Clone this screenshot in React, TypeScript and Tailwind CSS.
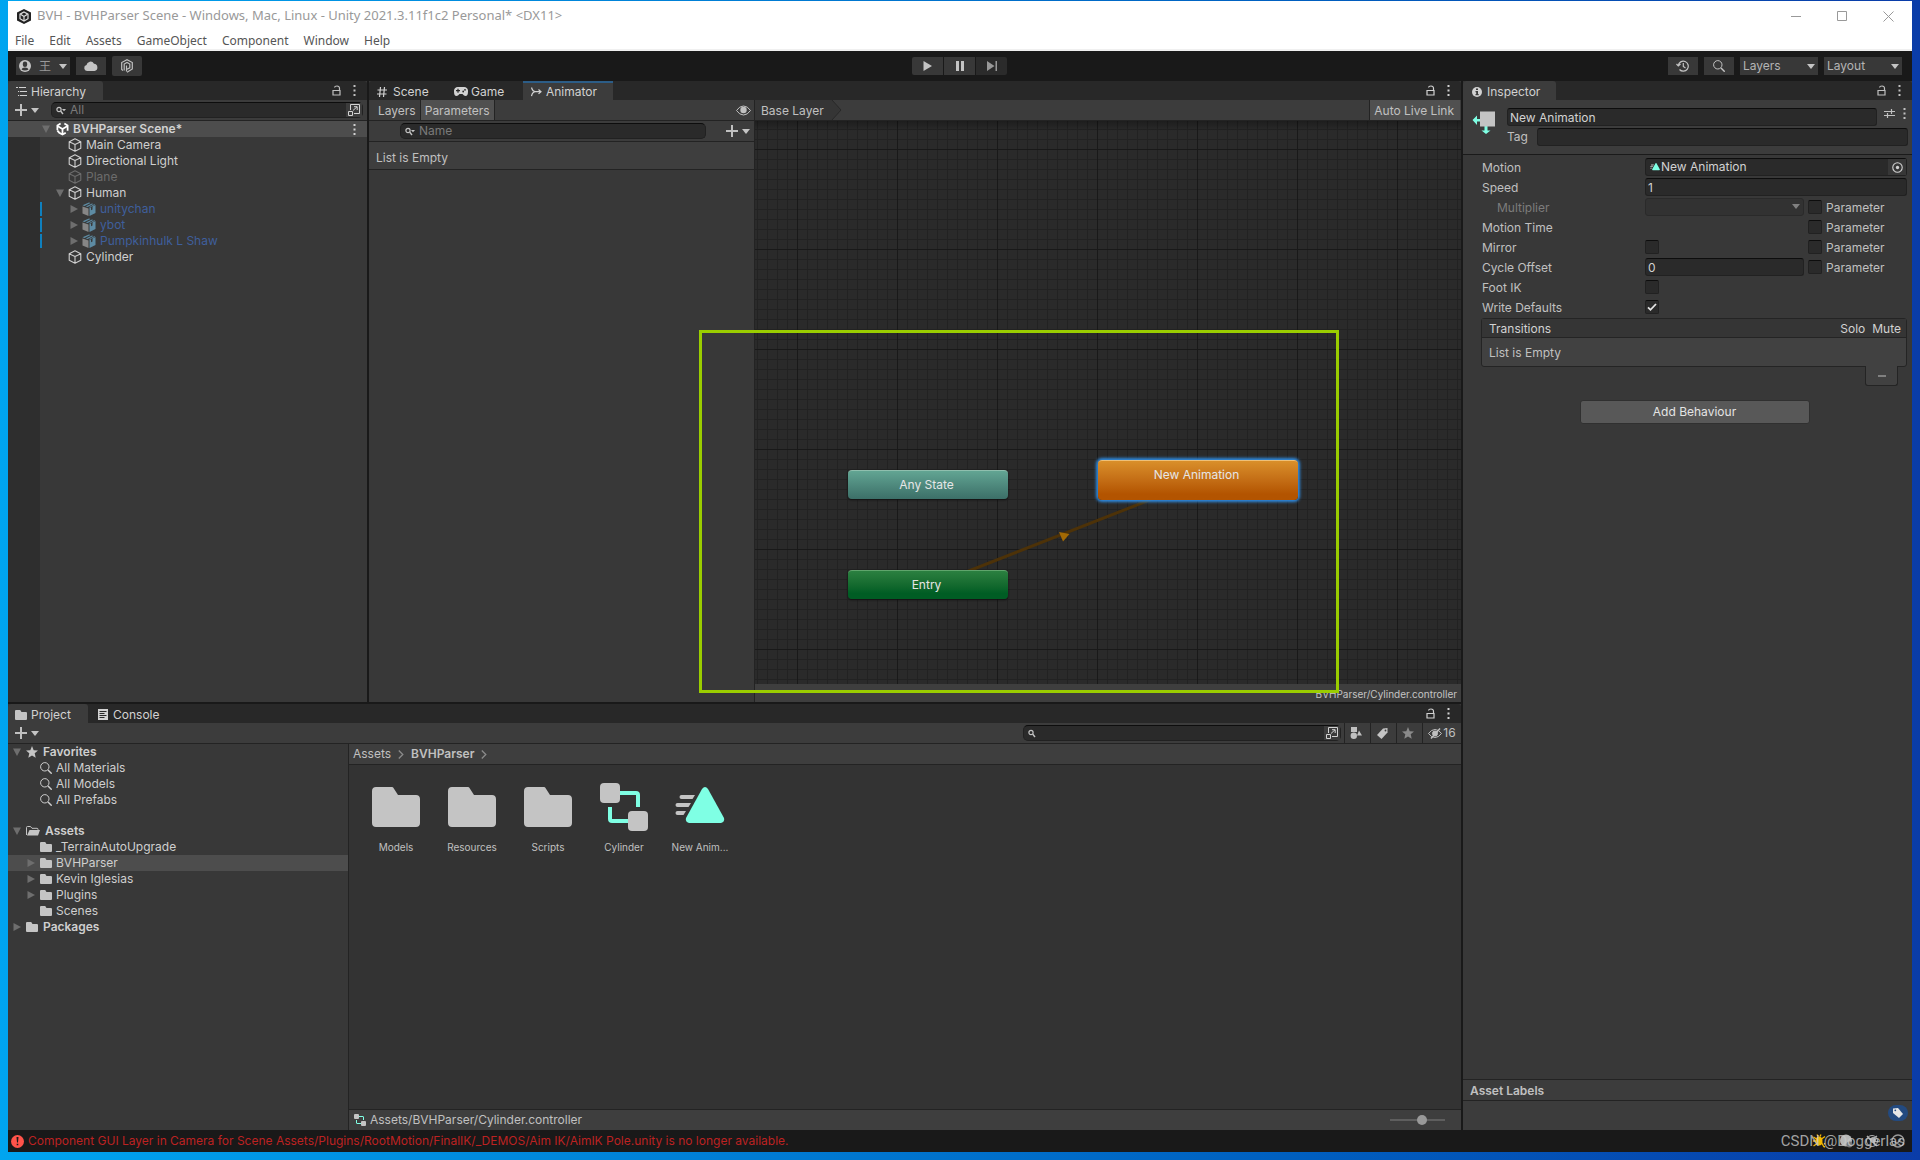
import React, { useState } from "react";

type IconProps = { className?: string };

function Caret({ className = "w-2 h-[5px] text-[#c4c4c4]" }: IconProps) {
    return (
        <svg className={className} viewBox="0 0 8 5" fill="currentColor">
            <path d="M0 0h8L4 5z" />
        </svg>
    );
}

function Foldout({ open }: { open?: boolean }) {
    return (
        <svg className="w-2 h-2 shrink-0 text-[#6e6e6e]" viewBox="0 0 8 8" fill="currentColor">
            {open ? <path d="M0 0.500h8L4 8z" /> : <path d="M0.500 0v8L8 4z" />}
        </svg>
    );
}

function LockIcon() {
    return (
        <svg className="w-[9px] h-[11px]" viewBox="0 0 9 11" fill="none" stroke="currentColor">
            <path d="M1 5.500h7v4.500h-7zM7.500 5.500V3.500C7.500 1.800 6.500 1 5 1S2.600 1.600 2.500 2.500" strokeWidth="1.200" />
        </svg>
    );
}

function DotsIcon() {
    return (
        <svg className="w-[3px] h-[11px]" viewBox="0 0 3 11" fill="currentColor">
            <path d="M0.500 0h2v2h-2zM0.500 4.500h2v2h-2zM0.500 9h2v2h-2z" />
        </svg>
    );
}

function PlusIcon() {
    return (
        <svg className="w-3 h-3" viewBox="0 0 12 12" fill="currentColor">
            <path d="M5 0h2v5h5v2H7v5H5V7H0V5h5z" />
        </svg>
    );
}

function FieldSearchIcon({ menu }: { menu?: boolean }) {
    return (
        <svg className="w-[10px] h-[9px] shrink-0 text-[#c4c4c4]" viewBox="0 0 10 9" fill="none" stroke="currentColor">
            <circle cx="3" cy="3.500" r="2.100" strokeWidth="1.200" />
            <path d="M4.800 5.200L7 8" strokeWidth="1.400" />
            {menu && <path d="M6 3h4L8 5.200z" fill="currentColor" stroke="none" />}
        </svg>
    );
}

function SearchIcon({ className = "w-3 h-3" }: IconProps) {
    return (
        <svg className={className} viewBox="0 0 12 12" fill="none" stroke="currentColor">
            <circle cx="4.800" cy="4.800" r="4.200" strokeWidth="1" />
            <path d="M8 8l3.700 3.700" strokeWidth="1.400" />
        </svg>
    );
}

function PopoutIcon() {
    return (
        <svg className="w-3 h-3" viewBox="0 0 12 12" fill="none" stroke="currentColor">
            <path d="M2.500 6V0.500h9v9H6M0.500 7.500h4v4h-4zM5 6.500L9 2.800M6 2.700h3.200V6" />
        </svg>
    );
}

function CubeIcon() {
    return (
        <svg className="w-[14px] h-[14px] shrink-0" viewBox="0 0 14 14" fill="none" stroke="currentColor" strokeLinejoin="round">
            <path d="M7 0.700l5.800 3v6.600L7 13.300l-5.800-3V3.700zM1.200 3.700L7 6.600l5.800-2.900M7 6.600v6.700" strokeWidth="1.100" />
        </svg>
    );
}

function PrefabIcon() {
    return (
        <svg className="w-[14px] h-[14px] shrink-0" viewBox="0 0 14 14">
            <path d="M0.500 4.500L6.500 6.500V14L0.500 11.500z" fill="#868686" />
            <path d="M0.500 3.300L7 0.500l1.500 0.500-6 2.900zM3.800 4.500L10 1.500l1.200 0.400-5.500 3.200z" fill="#5d8ba3" />
            <path d="M7.500 6L9 5.300v3l1.500-0.800v-3L13.500 3v8L7.500 14z" fill="#5d8ba3" />
            <path d="M6.800 5.300l5.400-3L13.300 2.700 7.500 5.500z" fill="#5d8ba3" />
        </svg>
    );
}

function UnityIcon({ className = "w-[13px] h-[14px]" }: IconProps) {
    return (
        <svg className={className} viewBox="0 0 14 14" fill="none" stroke="currentColor">
            <path d="M5 1.200L1.500 3.300v5M1.500 8.800L3.500 11l3.500 2 3.500-2M9 1.200l3.500 2.100V8.800" strokeWidth="1.900" />
            <path d="M7 7v5.500M7 7L2 4.100M7 7l5-2.900" strokeWidth="1.900" />
        </svg>
    );
}

function FolderIcon({ className = "w-3 h-[10px] shrink-0 text-[#c4c4c4]" }: IconProps) {
    return (
        <svg className={className} viewBox="0 0 48 40" fill="currentColor">
            <path d="M4 0h15.500c1 0 1.600 0.400 2 1L26 8h18c2.500 0 4 1.500 4 4v24c0 2.500-1.500 4-4 4H4c-2.500 0-4-1.500-4-4V4c0-2.500 1.500-4 4-4z" />
        </svg>
    );
}

function OpenFolderIcon() {
    return (
        <svg className="w-[14px] h-[10px] shrink-0" viewBox="0 0 14 10">
            <path d="M0.500 9V1.500Q0.500 0.500 1.500 0.500H4.500L6 2.300h5q1 0 1 1V4" fill="none" stroke="#c4c4c4" />
            <path d="M3.500 4H14l-2 5.500H1z" fill="#c4c4c4" />
        </svg>
    );
}

function StarIcon({ className }: IconProps) {
    return (
        <svg className={className} viewBox="0 0 12 12" fill="currentColor">
            <path d="M6 0l1.700 4.200 4.300 0.300-3.300 2.800L9.700 11.800 6 9.400 2.300 11.800l1-4.500L0 4.500l4.300-0.300z" />
        </svg>
    );
}

function ControllerIcon({ className }: IconProps) {
    return (
        <svg className={className} viewBox="0 0 48 48">
            <path d="M20 10h16q2 0 2 2v12M10 24v12q0 2 2 2h16" fill="none" stroke="#7fffe4" strokeWidth="4" />
            <rect width="20" height="20" rx="4" fill="#c4c4c4" />
            <rect x="28" y="28" width="20" height="20" rx="4" fill="#c4c4c4" />
        </svg>
    );
}

function ClipIcon({ className }: IconProps) {
    return (
        <svg className={className} viewBox="0 0 50 48">
            <g fill="#c4c4c4">
                <path d="M6.500 12H20l-2.500 4h-11a2 2 0 010-4zM2.500 20H16l-2.500 4h-11a2 2 0 010-4zM2.500 28H11l-2.500 4h-6a2 2 0 010-4z" />
            </g>
            <path d="M27 6q3-4 6 0l16 29q1 4-3 5H14q-4-1-3-5z" fill="#7fffe4" />
        </svg>
    );
}

function EyeIcon() {
    return (
        <svg className="w-[15px] h-[11px]" viewBox="0 0 15 11">
            <path d="M0.500 5.500Q3.500 1 7.500 1t7 4.500Q11.500 10 7.500 10t-7-4.500z" fill="none" stroke="currentColor" />
            <circle cx="7.500" cy="5" r="3.200" fill="currentColor" />
        </svg>
    );
}

function TabActions() {
    return (
        <div className="ml-auto flex items-center gap-3 pr-[11px]">
            <button type="button" aria-label="Lock">
                <LockIcon />
            </button>
            <button type="button" aria-label="Panel menu">
                <DotsIcon />
            </button>
        </div>
    );
}

const inputClass =
    "min-w-0 bg-[#2a2a2a] border border-[#212121] border-t-[#0d0d0d] rounded-[3px] outline-none text-[#d2d2d2] placeholder-[#7a7a7a] disabled:bg-[#303030]";

function Check({ label, defaultChecked, text }: { label: string; defaultChecked?: boolean; text?: string }) {
    return (
        <label className="flex items-center gap-1 h-5">
            <span className="relative block w-[14px] h-[14px]">
                <input
                    type="checkbox"
                    aria-label={label}
                    defaultChecked={defaultChecked}
                    className="peer block appearance-none w-[14px] h-[14px] bg-[#2a2a2a] border border-[#212121] border-t-[#0d0d0d] rounded-[2px]"
                />
                <svg
                    className="absolute inset-0 hidden peer-checked:block pointer-events-none"
                    viewBox="0 0 14 14"
                    fill="none"
                    stroke="#e4e4e4"
                    strokeWidth="1.800"
                >
                    <path d="M3 7.300l2.500 2.500L11 4" />
                </svg>
            </span>
            {text && <span className="pt-[2px]">{text}</span>}
        </label>
    );
}

const menus = ["File", "Edit", "Assets", "GameObject", "Component", "Window", "Help"];

function TitleBar() {
    return (
        <header className="bg-white border-b-2 border-[#f0f0f0] font-['Noto_Sans',sans-serif] text-xs">
            <div className="flex items-center h-[30px] pl-[9px] pr-[18px] text-[#999]">
                <svg className="w-[14px] h-[15px]" viewBox="0 0 14 15">
                    <path d="M7 0l7 3.500v8L7 15l-7-3.500v-8z" fill="#222" />
                    <g fill="none" stroke="#ddd" strokeWidth="1.200">
                        <path d="M7 3l4 2.200v4.500L7 12 3 9.700V5.200z" />
                        <path d="M7 7.500V12M7 7.500L3.500 5.300M7 7.500l3.500-2.200" />
                    </g>
                </svg>
                <h1 className="ml-[6px] text-[13px]">
                    BVH - BVHParser Scene - Windows, Mac, Linux - Unity 2021.3.11f1c2 Personal* &lt;DX11&gt;
                </h1>
                <div className="ml-auto flex items-center gap-9">
                    <button type="button" aria-label="Minimize">
                        <svg className="w-[10px] h-[10px]" viewBox="0 0 10 10" stroke="currentColor">
                            <path d="M0 5.500h10" />
                        </svg>
                    </button>
                    <button type="button" aria-label="Maximize">
                        <svg className="w-[10px] h-[10px]" viewBox="0 0 10 10" fill="none" stroke="currentColor">
                            <path d="M0.500 0.500h9v9h-9z" />
                        </svg>
                    </button>
                    <button type="button" aria-label="Close">
                        <svg className="w-[11px] h-[11px]" viewBox="0 0 11 11" stroke="currentColor">
                            <path d="M0.500 0.500l10 10M10.500 0.500l-10 10" />
                        </svg>
                    </button>
                </div>
            </div>
            <nav className="flex gap-[15px] h-[18px] px-[7px] leading-5 text-[#555]">
                {menus.map((m) => (
                    <button key={m} type="button">
                        {m}
                    </button>
                ))}
            </nav>
        </header>
    );
}

function ToolbarSelect({ label }: { label: string }) {
    return (
        <div className="relative w-[78px]">
            <select
                aria-label={label}
                className="appearance-none block w-full h-[18px] pl-[3px] bg-[#383838] text-[#b4b4b4] outline-none"
            >
                <option>{label}</option>
            </select>
            <Caret className="absolute right-[3px] top-[7px] w-2 h-[5px] text-[#c4c4c4] pointer-events-none" />
        </div>
    );
}

function Toolbar() {
    const btn = "flex items-center justify-center h-[18px] bg-[#383838] text-[#c4c4c4]";
    return (
        <div className="grid grid-cols-3 items-center h-[30px] px-2 bg-[#191919]">
            <div className="flex items-center gap-[6px]">
                <button type="button" aria-label="Account" className={`${btn} w-[54px] gap-2`}>
                    <svg className="w-3 h-3" viewBox="0 0 12 12">
                        <circle cx="6" cy="6" r="6" fill="#c4c4c4" />
                        <path d="M6 1.500a2.200 2.200 0 012.200 2.200v1a2.200 2.200 0 01-4.400 0v-1A2.200 2.200 0 016 1.500zM2.500 9.500Q3 7.500 6 7.500t3.500 2Q8 10.500 6 10.500T2.500 9.500z" fill="#383838" />
                    </svg>
                    <span className="font-['Noto_Sans_CJK_SC',sans-serif] leading-[18px] text-[#999]">王</span>
                    <Caret />
                </button>
                <button type="button" aria-label="Cloud" className={`${btn} w-[30px]`}>
                    <svg className="w-[14px] h-[10px]" viewBox="0 0 14 10" fill="currentColor">
                        <path d="M3 10a3 3 0 01-0.500-5.900A4 4 0 0110 2.700 3.700 3.700 0 0110.500 10z" />
                    </svg>
                </button>
                <button type="button" aria-label="Plastic SCM" className="flex items-center justify-center w-[30px] h-5 bg-[#383838] rounded-[2px]">
                    <svg className="w-3 h-[14px]" viewBox="0 0 12 14" fill="none" stroke="currentColor" strokeWidth="1.200">
                        <path d="M2 11.500L0.700 10.500v-7L6 0.700l5.300 2.800v6.500L6 13.300" />
                        <path d="M3.200 11.500V5L6 3.500 8.800 5v3.800L6 10.300M5.500 12.500V6.500" />
                    </svg>
                </button>
            </div>
            <div className="flex justify-center gap-px">
                <button type="button" aria-label="Play" className={`${btn} w-[31px] rounded-l-[2px]`}>
                    <svg className="w-[9px] h-[10px]" viewBox="0 0 9 10" fill="currentColor">
                        <path d="M0.500 0L9 5 0.500 10z" />
                    </svg>
                </button>
                <button type="button" aria-label="Pause" className={`${btn} w-[31px]`}>
                    <svg className="w-2 h-[10px]" viewBox="0 0 8 10" fill="currentColor">
                        <path d="M0 0h3v10H0zM5 0h3v10H5z" />
                    </svg>
                </button>
                <button type="button" aria-label="Step" className="flex items-center justify-center w-[31px] h-[18px] bg-[#2b2b2b] text-[#999] rounded-r-[2px]">
                    <svg className="w-[10px] h-[10px]" viewBox="0 0 10 10" fill="currentColor">
                        <path d="M0 0l7.500 5L0 10zM8.500 0H10v10H8.500z" />
                    </svg>
                </button>
            </div>
            <div className="flex justify-end gap-[6px] pr-[2px]">
                <button type="button" aria-label="Undo history" className={`${btn} w-[30px]`}>
                    <svg className="w-[14px] h-3" viewBox="0 0 14 12" fill="none" stroke="currentColor" strokeWidth="1.200">
                        <path d="M2.300 5.500A5 5 0 113.500 9.500M0.500 4l1.800 2L4.500 4M7.300 3v3.500l2.200 1.500" />
                    </svg>
                </button>
                <button type="button" aria-label="Search" className={`${btn} w-[30px]`}>
                    <SearchIcon />
                </button>
                <ToolbarSelect label="Layers" />
                <ToolbarSelect label="Layout" />
            </div>
        </div>
    );
}

type Node = {
    name: string;
    kind: "cube" | "prefab";
    fold?: "open" | "closed";
    dim?: boolean;
};

const hierarchy: Node[] = [
    { name: "Main Camera", kind: "cube" },
    { name: "Directional Light", kind: "cube" },
    { name: "Plane", kind: "cube", dim: true },
    { name: "Human", kind: "cube", fold: "open" },
    { name: "unitychan", kind: "prefab", fold: "closed" },
    { name: "ybot", kind: "prefab", fold: "closed" },
    { name: "Pumpkinhulk L Shaw", kind: "prefab", fold: "closed" },
    { name: "Cylinder", kind: "cube" },
];

function HierarchyPanel() {
    return (
        <section className="flex flex-col w-[359px] shrink-0 bg-[#383838]">
            <div className="flex h-[19px] bg-[#282828] rounded-t-[3px]">
                <button type="button" className="flex items-center gap-1 w-[95px] pl-2 pt-[2px] bg-[#3c3c3c] rounded-t-[3px] text-[#d2d2d2]">
                    <svg className="w-[11px] h-[9px]" viewBox="0 0 11 9" stroke="currentColor">
                        <path d="M0 0.500h2M3 0.500h7M4 4.500h7M2 4.500h1.200M4 8.500h7M2 8.500h1.200" />
                    </svg>
                    Hierarchy
                </button>
                <TabActions />
            </div>
            <div className="flex items-center h-[21px] px-[7px] pr-1 bg-[#3c3c3c] border-b border-[#232323]">
                <button type="button" aria-label="Create" className="flex items-center gap-1 w-9">
                    <PlusIcon />
                    <Caret />
                </button>
                <label className={`${inputClass} flex items-center flex-1 h-4 pl-1 gap-1 rounded-[5px]`}>
                    <FieldSearchIcon menu />
                    <input type="text" aria-label="Search hierarchy" placeholder="All" className="flex-1 min-w-0 bg-transparent outline-none placeholder-[#7a7a7a]" />
                    <button type="button" aria-label="Open in search" className="flex items-center justify-center w-4 h-full bg-[#3c3c3c]">
                        <PopoutIcon />
                    </button>
                </label>
            </div>
            <div className="flex items-center h-4 pl-[34px] pr-[11px] bg-[#4d4d4d] font-semibold text-[#d2d2d2]">
                <Foldout open />
                <UnityIcon className="w-[13px] h-[14px] ml-[6px] mr-1 text-white" />
                BVHParser Scene*
                <button type="button" aria-label="Scene menu" className="ml-auto">
                    <DotsIcon />
                </button>
            </div>
            <div className="flex flex-1">
                <div className="w-8 bg-[#2e2e2e]" />
                <ul className="flex-1">
                    {hierarchy.map((n) => (
                        <li
                            key={n.name}
                            className={`flex items-center h-4 ${
                                n.kind === "prefab" ? "text-[#3f5f9c]" : n.dim ? "text-[#6c6c6c]" : "text-[#cfcfcf]"
                            }`}
                        >
                            <span className={n.kind === "prefab" ? "w-[2px] h-[14px] mr-7 bg-[#0f80be]" : "w-4"} />
                            <span className="w-3">{n.fold && <Foldout open={n.fold === "open"} />}</span>
                            {n.kind === "cube" ? <CubeIcon /> : <PrefabIcon />}
                            <span className="ml-1">{n.name}</span>
                        </li>
                    ))}
                </ul>
            </div>
        </section>
    );
}

function StateGraph() {
    const node = "absolute flex justify-center pr-[3px] rounded text-[#e6e6e6] shadow-[0_1px_2px_#111]";
    return (
        <div className="relative flex-1 bg-[#2a2a2a] overflow-hidden">
            <svg className="absolute inset-0 w-full h-full">
                <defs>
                    <pattern id="minor" x="2" y="8" width="10" height="10" patternUnits="userSpaceOnUse">
                        <path d="M0.500 0v10M0 0.500h10" stroke="#222" />
                    </pattern>
                    <pattern id="major" x="42" y="28" width="100" height="100" patternUnits="userSpaceOnUse">
                        <path d="M0.500 0v100M0 0.500h100" stroke="#191919" />
                    </pattern>
                    <linearGradient id="fade" x2="0" y2="1">
                        <stop offset="0" stopColor="#000" stopOpacity="0.300" />
                        <stop offset="1" stopColor="#000" stopOpacity="0" />
                    </linearGradient>
                </defs>
                <rect width="100%" height="100%" fill="url(#minor)" />
                <rect width="100%" height="100%" fill="url(#major)" />
                <rect width="100%" height="10" fill="url(#fade)" />
                <path d="M173 466L443 360" stroke="#4d3208" strokeWidth="3" />
                <path d="M304 411l10.500 2-6.500 7.500z" fill="#a36a04" />
            </svg>
            <button type="button" className={`${node} left-[93px] top-[349px] w-[160px] h-[29px] items-center border-t border-[#8fbfae] bg-linear-to-b from-[#62a593] to-[#3c6f68]`}>
                Any State
            </button>
            <button type="button" className={`${node} left-[93px] top-[449px] w-[160px] h-[29px] items-center border-t border-[#5fa56c] bg-linear-to-b from-[#2b8040] to-[#005d24] to-80%`}>
                Entry
            </button>
            <button
                type="button"
                className="absolute left-[343px] top-[339px] flex justify-center w-[200px] h-10 pt-[6px] pr-[3px] rounded border-t border-[#eec078] bg-linear-to-b from-[#d98f2a] to-[#b35400] to-85% text-[#e6e6e6] leading-4 shadow-[0_0_3px_2px_#2f8be0]"
            >
                New Animation
            </button>
        </div>
    );
}

function AnimatorPanel() {
    const [pane, setPane] = useState("Parameters");
    const tab = "flex items-center pl-2";
    return (
        <section className="relative flex flex-col flex-1 min-w-0 bg-[#383838]">
            <div className="flex h-[19px] bg-[#282828] rounded-t-[3px] text-[#d2d2d2]">
                <button type="button" className={`${tab} gap-[6px] w-[77px] pt-[2px]`}>
                    <svg className="w-[10px] h-[10px]" viewBox="0 0 10 10" stroke="currentColor">
                        <path d="M3.500 0L2.500 10M7.500 0l-1 10M0.500 3h9.500M0 7h9.500" strokeWidth="1.200" />
                    </svg>
                    Scene
                </button>
                <button type="button" className={`${tab} gap-[3px] w-[77px] pt-[2px]`}>
                    <svg className="w-[14px] h-[9px]" viewBox="0 0 14 9">
                        <path d="M4 0h6a4 4 0 014 4.500Q14 9 11.500 9 10 9 8.500 7h-3Q4 9 2.500 9 0 9 0 4.500A4 4 0 014 0z" fill="#d2d2d2" />
                        <path d="M2 3.700h4M4 1.700v4" stroke="#282828" strokeWidth="1.200" />
                        <circle cx="9.200" cy="4.500" r="0.900" fill="#282828" />
                        <circle cx="11" cy="2.800" r="0.900" fill="#282828" />
                    </svg>
                    Game
                </button>
                <button type="button" className={`${tab} gap-1 w-[90px] border-t-2 border-[#2c5d87] bg-[#3c3c3c]`}>
                    <svg className="w-[11px] h-[10px]" viewBox="0 0 11 10" fill="none" stroke="currentColor" strokeWidth="1.200">
                        <path d="M0.500 0.500Q1.500 4.500 4.500 4.700Q1.500 5 0.500 9M4 4.700h5.500M7.500 2.500l2.500 2.200-2.500 2.200" />
                    </svg>
                    Animator
                </button>
                <TabActions />
            </div>
            <div className="flex flex-1 min-h-0">
                <div className="flex flex-col w-[386px] border-r border-[#232323]">
                    <div className="flex items-center h-[21px] pl-[5px] pr-[3px] bg-[#3c3c3c] border-b border-[#232323]">
                        {["Layers", "Parameters"].map((p) => (
                            <button
                                key={p}
                                type="button"
                                onClick={() => setPane(p)}
                                className={`h-5 px-1 pt-px border-r border-[#232323] ${pane === p ? "bg-[#505050]" : ""}`}
                            >
                                {p}
                            </button>
                        ))}
                        <button type="button" aria-label="Hide pane" className="ml-auto">
                            <EyeIcon />
                        </button>
                    </div>
                    <div className="flex items-center h-[21px] pl-[31px] pr-1 bg-[#3c3c3c] border-b border-[#232323]">
                        <label className={`${inputClass} flex items-center flex-1 h-4 pl-1 gap-1 rounded-[5px]`}>
                            <FieldSearchIcon menu />
                            <input type="text" aria-label="Search parameters" placeholder="Name" className="flex-1 min-w-0 bg-transparent outline-none placeholder-[#7a7a7a]" />
                        </label>
                        <button type="button" aria-label="Add parameter" className="flex items-center gap-1 ml-5">
                            <PlusIcon />
                            <Caret />
                        </button>
                    </div>
                    <p className="h-7 pt-1 pl-[7px] leading-6 bg-[#3e3e3e] border-b border-[#232323]">List is Empty</p>
                </div>
                <div className="flex flex-col flex-1 min-w-0">
                    <div className="flex items-center h-[21px] bg-[#3c3c3c] border-b border-[#232323]">
                        <button type="button" className="h-5 pl-[6px] pr-1 pt-px bg-[#353535]">
                            Base Layer
                        </button>
                        <svg className="w-[14px] h-5" viewBox="0 0 14 20">
                            <path d="M0 0h4l9 10-9 10H0z" fill="#353535" />
                            <path d="M4 0l9 10-9 10" fill="none" stroke="#282828" />
                        </svg>
                        <button type="button" className="h-5 ml-auto mr-px pl-1 pr-[6px] pt-px bg-[#505050] border-l border-[#232323]">
                            Auto Live Link
                        </button>
                    </div>
                    <StateGraph />
                    <footer className="h-[18px] pr-1 bg-[#3e3e3e] text-[10px] leading-5 text-right text-[#c4c4c4]">
                        BVHParser/Cylinder.controller
                    </footer>
                </div>
            </div>
            <div className="absolute left-[330px] top-[249px] w-[640px] h-[363px] border-3 border-[#9acd00] pointer-events-none" />
        </section>
    );
}

type Folder = { name: string; fold?: boolean; selected?: boolean };

const folders: Folder[] = [
    { name: "_TerrainAutoUpgrade" },
    { name: "BVHParser", fold: true, selected: true },
    { name: "Kevin Iglesias", fold: true },
    { name: "Plugins", fold: true },
    { name: "Scenes" },
];

const assets = [
    { name: "Models", icon: <FolderIcon className="w-12 h-10 text-[#c4c4c4]" /> },
    { name: "Resources", icon: <FolderIcon className="w-12 h-10 text-[#c4c4c4]" /> },
    { name: "Scripts", icon: <FolderIcon className="w-12 h-10 text-[#c4c4c4]" /> },
    { name: "Cylinder", icon: <ControllerIcon className="w-12 h-12" /> },
    { name: "New Anim...", icon: <ClipIcon className="w-[50px] h-12" /> },
];

function Crumb() {
    return (
        <svg className="w-[6px] h-[9px] text-[#8a8a8a]" viewBox="0 0 6 9" fill="none" stroke="currentColor" strokeWidth="1.300">
            <path d="M0.800 0.500l4 4-4 4" />
        </svg>
    );
}

function ProjectPanel() {
    const [zoom, setZoom] = useState(60);
    const tool = "flex items-center justify-center h-5 border-l border-[#232323]";
    return (
        <section className="flex flex-col h-[426px] shrink-0 bg-[#383838]">
            <div className="flex h-[19px] bg-[#282828] rounded-t-[3px] text-[#d2d2d2]">
                <button type="button" className="flex items-center gap-1 w-20 pl-[7px] pt-[2px] bg-[#3c3c3c] rounded-t-[3px]">
                    <FolderIcon />
                    Project
                </button>
                <button type="button" className="flex items-center gap-[5px] pl-[10px] pt-[2px]">
                    <svg className="w-[10px] h-[11px]" viewBox="0 0 10 11">
                        <path d="M0 0h10v11H0z" fill="#d2d2d2" />
                        <path d="M1.500 2.500h7M1.500 4.500h5M1.500 6.500h7M1.500 8.500h5" stroke="#282828" />
                    </svg>
                    Console
                </button>
                <TabActions />
            </div>
            <div className="flex items-center h-[21px] pl-[7px] bg-[#3c3c3c] border-b border-[#232323]">
                <button type="button" aria-label="Create asset" className="flex items-center gap-1">
                    <PlusIcon />
                    <Caret />
                </button>
                <label className={`${inputClass} flex items-center ml-auto mr-[3px] w-[318px] h-4 pl-1 gap-1 rounded-[5px]`}>
                    <FieldSearchIcon />
                    <input type="text" aria-label="Search project" className="flex-1 min-w-0 bg-transparent outline-none" />
                    <button type="button" aria-label="Open in search" className="flex items-center justify-center w-4 h-full bg-[#3c3c3c]">
                        <PopoutIcon />
                    </button>
                </label>
                <button type="button" aria-label="Search by type" className={`${tool} w-[26px] pr-[3px]`}>
                    <svg className="w-3 h-3" viewBox="0 0 12 12" fill="currentColor">
                        <path d="M1 0h6v5H1zM9 3.500l3 5H7z" />
                        <circle cx="3.800" cy="8.700" r="3.200" />
                    </svg>
                </button>
                <button type="button" aria-label="Search by label" className={`${tool} w-[26px] pr-[3px]`}>
                    <svg className="w-[11px] h-[11px]" viewBox="0 0 11 11">
                        <path d="M0 7l6-6.500L10.500 0v4.500L4.500 11z" fill="#c4c4c4" />
                        <circle cx="8.500" cy="2.500" r="0.900" fill="#3c3c3c" />
                    </svg>
                </button>
                <button type="button" aria-label="Save search" className={`${tool} w-[26px] pr-[3px]`}>
                    <StarIcon className="w-3 h-3 text-[#8a8a8a]" />
                </button>
                <button type="button" aria-label="Hidden packages" className={`${tool} w-[39px] gap-px`}>
                    <svg className="w-[14px] h-[11px]" viewBox="0 0 14 11" fill="none" stroke="currentColor">
                        <path d="M0.500 5.500Q3.500 1.500 7 1.500t6.500 4Q10.500 9.500 7 9.500t-6.500-4z" />
                        <path d="M7 3a2.500 2.500 0 100 5 2.500 2.500 0 000-5z" fill="currentColor" />
                        <path d="M3 10.500L12 0.500" strokeWidth="1.500" />
                    </svg>
                    16
                </button>
            </div>
            <div className="flex flex-1 min-h-0">
                <nav className="w-[341px] border-r border-[#232323] text-[#cfcfcf]">
                    <div className="flex items-center h-4 pl-[5px] gap-[5px] font-semibold">
                        <Foldout open />
                        <StarIcon className="w-3 h-3 text-[#c4c4c4]" />
                        Favorites
                    </div>
                    <ul className="mb-[15px]">
                        {["All Materials", "All Models", "All Prefabs"].map((f) => (
                            <li key={f} className="flex items-center h-4 pl-8 gap-1">
                                <SearchIcon />
                                {f}
                            </li>
                        ))}
                    </ul>
                    <div className="flex items-center h-4 pl-[5px] gap-[5px] font-semibold">
                        <Foldout open />
                        <OpenFolderIcon />
                        Assets
                    </div>
                    <ul>
                        {folders.map((f) => (
                            <li key={f.name} className={`flex items-center h-4 pl-[19px] ${f.selected ? "bg-[#4d4d4d]" : ""}`}>
                                <span className="w-[13px]">{f.fold && <Foldout />}</span>
                                <FolderIcon />
                                <span className="ml-1">{f.name}</span>
                            </li>
                        ))}
                    </ul>
                    <div className="flex items-center h-4 pl-[5px] gap-[5px] font-semibold">
                        <Foldout />
                        <FolderIcon />
                        Packages
                    </div>
                </nav>
                <div className="flex flex-col flex-1 min-w-0 bg-[#333333]">
                    <div className="flex items-center gap-[7px] h-[21px] pl-1 bg-[#3e3e3e] border-b border-[#232323]">
                        <a href="#assets">Assets</a>
                        <Crumb />
                        <a href="#bvhparser" className="font-semibold">
                            BVHParser
                        </a>
                        <Crumb />
                    </div>
                    <ul className="flex flex-1 pt-[18px] pl-[9px]">
                        {assets.map((a) => (
                            <li key={a.name} className="flex flex-col items-center w-[76px] text-[10px] leading-4">
                                <div className="flex items-center h-12">{a.icon}</div>
                                <span className="mt-2">{a.name}</span>
                            </li>
                        ))}
                    </ul>
                    <footer className="flex items-center gap-1 h-[21px] pl-[5px] pr-4 bg-[#3e3e3e] border-t border-[#232323]">
                        <ControllerIcon className="w-3 h-3" />
                        Assets/BVHParser/Cylinder.controller
                        <input
                            type="range"
                            aria-label="Icon size"
                            value={zoom}
                            onChange={(e) => setZoom(Number(e.target.value))}
                            className="ml-auto w-[55px] h-[10px] appearance-none bg-transparent [&::-webkit-slider-runnable-track]:h-[2px] [&::-webkit-slider-runnable-track]:bg-[#5e5e5e] [&::-webkit-slider-thumb]:appearance-none [&::-webkit-slider-thumb]:w-[10px] [&::-webkit-slider-thumb]:h-[10px] [&::-webkit-slider-thumb]:-mt-1 [&::-webkit-slider-thumb]:rounded-full [&::-webkit-slider-thumb]:bg-[#999]"
                        />
                    </footer>
                </div>
            </div>
        </section>
    );
}

function Row({ label, htmlFor, dim, children }: { label: string; htmlFor?: string; dim?: boolean; children?: React.ReactNode }) {
    return (
        <div className="flex items-center h-5">
            <label htmlFor={htmlFor} className={`w-[163px] pt-[2px] ${dim ? "pl-[15px] text-[#7c7c7c]" : ""}`}>
                {label}
            </label>
            {children}
        </div>
    );
}

function InspectorPanel() {
    return (
        <section className="flex flex-col w-[449px] shrink-0 bg-[#383838]">
            <div className="flex h-[19px] bg-[#282828] rounded-t-[3px]">
                <button type="button" className="flex items-center gap-[5px] w-[93px] pl-[9px] pt-[2px] bg-[#3c3c3c] rounded-t-[3px] text-[#d2d2d2]">
                    <svg className="w-[10px] h-[10px]" viewBox="0 0 10 10">
                        <circle cx="5" cy="5" r="5" fill="#d2d2d2" />
                        <path d="M4 1.500h2v1.500H4zM3.500 4H6v3h0.700v1.200H3.500V7h0.700V5.200h-0.700z" fill="#3c3c3c" />
                    </svg>
                    Inspector
                </button>
                <TabActions />
            </div>
            <div className="flex h-[55px] pt-2 pl-[9px] pr-1 bg-[#3c3c3c] border-b border-[#1a1a1a]">
                <svg className="w-6 h-6 mt-[3px]" viewBox="0 0 24 24">
                    <path d="M0.500 9L5 4.500V8h4v2.500H5V14zM14 23l-4.500-3.500h3V15h3v4.500h3z" fill="#7fffe4" />
                    <path d="M8 0.500h15v15H8z" fill="#c4c4c4" />
                </svg>
                <div className="flex flex-col flex-1 gap-[2px] ml-[11px]">
                    <div className="flex items-center">
                        <input type="text" aria-label="State name" defaultValue="New Animation" className={`${inputClass} flex-1 h-[18px] px-[2px]`} />
                        <button type="button" aria-label="Presets" className="ml-[7px] -mt-2">
                            <svg className="w-[11px] h-[9px]" viewBox="0 0 11 9" stroke="currentColor">
                                <path d="M0 2.500h11M7.500 0v5M0 6.500h11M3.500 4v5" strokeWidth="1.200" />
                            </svg>
                        </button>
                        <button type="button" aria-label="State menu" className="ml-2 mr-[2px] -mt-2">
                            <DotsIcon />
                        </button>
                    </div>
                    <div className="flex items-center">
                        <label htmlFor="tag" className="w-[30px]">
                            Tag
                        </label>
                        <input type="text" id="tag" className={`${inputClass} flex-1 h-[18px] px-[2px]`} />
                    </div>
                </div>
            </div>
            <div className="flex flex-col pl-[19px] pr-[5px] pt-[2px]">
                <Row label="Motion" htmlFor="motion">
                    <div className={`${inputClass} flex items-center flex-1 h-[18px] pl-1`}>
                        <ClipIcon className="w-[10px] h-[10px]" />
                        <input type="text" id="motion" defaultValue="New Animation" className="flex-1 min-w-0 ml-px bg-transparent outline-none" />
                        <button type="button" aria-label="Pick motion" className="flex items-center justify-center w-[18px] h-full bg-[#373737]">
                            <svg className="w-[11px] h-[11px]" viewBox="0 0 10 10" fill="none" stroke="currentColor">
                                <circle cx="5" cy="5" r="4.300" />
                                <circle cx="5" cy="5" r="1.500" fill="currentColor" stroke="none" />
                            </svg>
                        </button>
                    </div>
                </Row>
                <Row label="Speed" htmlFor="speed">
                    <input type="text" id="speed" defaultValue="1" className={`${inputClass} flex-1 h-[18px] px-[2px]`} />
                </Row>
                <Row label="Multiplier" htmlFor="multiplier" dim>
                    <div className="relative w-[159px] mr-1">
                        <select id="multiplier" disabled className="appearance-none block w-full h-[18px] bg-[#323232] border border-[#2a2a2a] rounded-[3px]">
                            <option></option>
                        </select>
                        <Caret className="absolute right-1 top-[6px] w-2 h-[5px] text-[#808080] pointer-events-none" />
                    </div>
                    <Check label="Multiplier parameter" text="Parameter" />
                </Row>
                <Row label="Motion Time">
                    <div className="w-[159px] mr-1" />
                    <Check label="Motion time parameter" text="Parameter" />
                </Row>
                <Row label="Mirror">
                    <div className="w-[159px] mr-1">
                        <Check label="Mirror" />
                    </div>
                    <Check label="Mirror parameter" text="Parameter" />
                </Row>
                <Row label="Cycle Offset" htmlFor="offset">
                    <input type="text" id="offset" defaultValue="0" className={`${inputClass} w-[159px] mr-1 h-[18px] px-[2px]`} />
                    <Check label="Cycle offset parameter" text="Parameter" />
                </Row>
                <Row label="Foot IK">
                    <Check label="Foot IK" />
                </Row>
                <Row label="Write Defaults">
                    <Check label="Write Defaults" defaultChecked />
                </Row>
                <div className="-ml-px mt-px border border-[#242424] rounded-[3px] bg-[#414141]">
                    <div className="flex items-center gap-[7px] h-[19px] pl-[7px] pr-[5px] pt-px bg-[#353535] border-b border-[#242424] text-[#d2d2d2]">
                        <span className="mr-auto">Transitions</span>
                        <span>Solo</span>
                        <span>Mute</span>
                    </div>
                    <p className="h-7 pt-px px-[7px] leading-7">List is Empty</p>
                </div>
                <button
                    type="button"
                    aria-label="Remove transition"
                    className="self-end flex items-center justify-center w-[33px] h-5 mr-[9px] -mt-px bg-[#414141] border border-t-0 border-[#242424] rounded-b-[3px]"
                >
                    <span className="w-2 h-[2px] bg-[#808080]" />
                </button>
                <button type="button" className="self-center w-[230px] h-6 mt-[14px] bg-[#585858] border border-[#303030] rounded-[3px] text-[#e4e4e4]">
                    Add Behaviour
                </button>
            </div>
            <div className="mt-auto">
                <h2 className="h-[22px] pl-[7px] leading-[22px] bg-[#3c3c3c] border-y border-[#232323] font-semibold">Asset Labels</h2>
                <div className="flex justify-end h-[29px] pt-1 pr-1 bg-[#3c3c3c]">
                    <button type="button" aria-label="Edit labels" className="flex items-center justify-center w-5 h-4 rounded-full bg-[#234a80]">
                        <svg className="w-[10px] h-[10px]" viewBox="0 0 10 10">
                            <path d="M0 0.500L5 0l5 6-4 4-6-5z" fill="#e6e6e6" />
                            <circle cx="2.300" cy="2.300" r="0.900" fill="#234a80" />
                        </svg>
                    </button>
                </div>
            </div>
        </section>
    );
}

function StatusBar() {
    return (
        <footer className="relative flex items-center h-[22px] pl-[3px] pr-px bg-[#191919]">
            <svg className="w-[13px] h-[13px] mr-1" viewBox="0 0 13 13">
                <circle cx="6.500" cy="6.500" r="6.500" fill="#ff534a" />
                <path d="M5.500 2h2L7 7.500H6zM5.700 8.700h1.600v1.600H5.700z" fill="#191919" />
            </svg>
            <p className="text-[#bd2222]">
                Component GUI Layer in Camera for Scene Assets/Plugins/RootMotion/FinalIK/_DEMOS/Aim IK/AimIK Pole.unity is no longer available.
            </p>
            <div className="ml-auto flex items-center">
                <button type="button" aria-label="Debugger" className="flex justify-center w-[26px]">
                    <svg className="w-[14px] h-[14px]" viewBox="0 0 14 14">
                        <ellipse cx="6" cy="7" rx="3.500" ry="4.500" fill="#f5b800" />
                        <path d="M0.500 3l3 2M0 7h3M0.500 12l3-2M4 0.500l1 2M8 0.500l-1 2M12 2.500L8.500 5M8.500 8.500L11 13M11.500 9v1.500M11.500 12v1.500" stroke="#f5b800" strokeWidth="1.300" />
                    </svg>
                </button>
                <button type="button" aria-label="Cache" className="flex justify-center w-[26px]">
                    <svg className="w-[14px] h-[14px]" viewBox="0 0 14 14">
                        <circle cx="7" cy="6.500" r="6" fill="#b8b8b8" />
                        <circle cx="10.500" cy="10.500" r="3" fill="#777" />
                    </svg>
                </button>
                <button type="button" aria-label="Auto generate lighting" className="flex justify-center w-[26px]">
                    <svg className="w-[14px] h-[14px]" viewBox="0 0 14 14" fill="none" stroke="#b0b0b0">
                        <circle cx="7" cy="7" r="5.500" />
                        <path d="M2 2l10 10M9 4l3-2" strokeWidth="1.500" />
                        <circle cx="8" cy="6" r="2.500" fill="#b0b0b0" />
                    </svg>
                </button>
                <button type="button" aria-label="Progress" className="flex justify-center w-[26px]">
                    <svg className="w-[14px] h-[14px]" viewBox="0 0 14 14" fill="none" stroke="#9a9a9a" strokeWidth="1.400">
                        <circle cx="7" cy="7" r="6" />
                        <path d="M4 7.500l2 2 4-4.500" />
                    </svg>
                </button>
            </div>
            <span className="absolute right-[7px] top-0 font-[Roboto,sans-serif] text-[15px] leading-[22px] text-[#c8c8c8]/80">CSDN @Doggerlas</span>
        </footer>
    );
}

export default function App() {
    return (
        <div className="h-screen pt-px px-2 pb-2 bg-linear-to-r from-[#00a5f0] to-[#0a3ca8] font-[Inter,sans-serif] text-xs text-[#c0c0c0]">
            <div className="flex flex-col h-full">
                <TitleBar />
                <Toolbar />
                <main className="flex flex-1 min-h-0 gap-[2px] bg-[#191919]">
                    <div className="flex flex-col flex-1 min-w-0 gap-[2px]">
                        <div className="flex flex-1 min-h-0 gap-[2px]">
                            <HierarchyPanel />
                            <AnimatorPanel />
                        </div>
                        <ProjectPanel />
                    </div>
                    <InspectorPanel />
                </main>
                <StatusBar />
            </div>
        </div>
    );
}
